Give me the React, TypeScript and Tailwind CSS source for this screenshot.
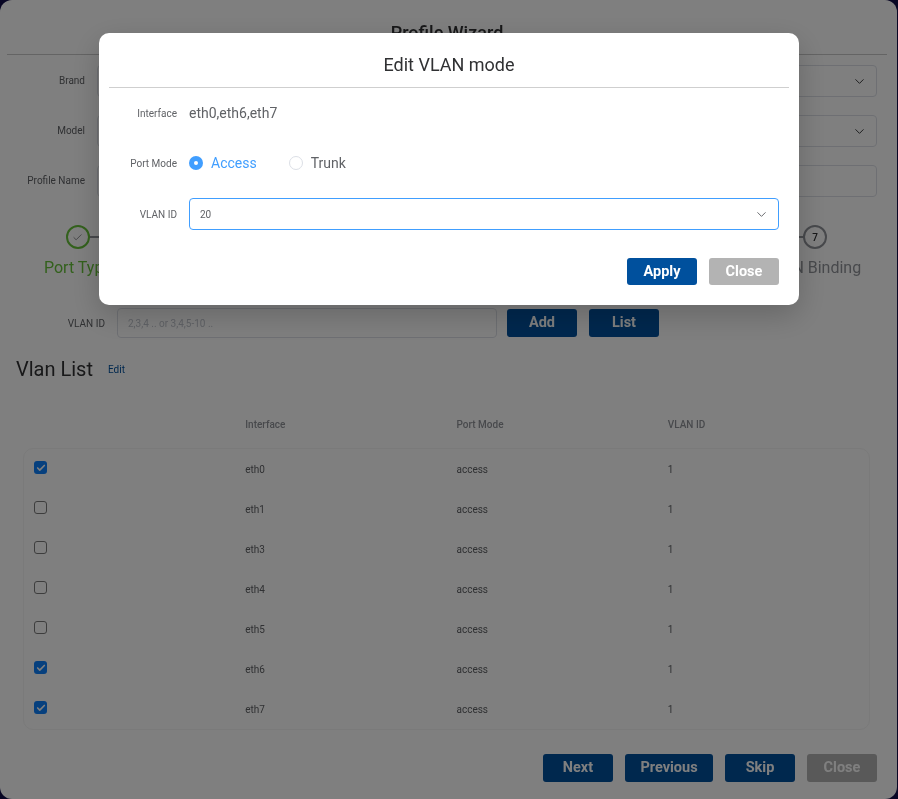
import { Check, ChevronDown } from 'lucide-react';

const ROWS = [
  { name: 'eth0', checked: true },
  { name: 'eth1', checked: false },
  { name: 'eth3', checked: false },
  { name: 'eth4', checked: false },
  { name: 'eth5', checked: false },
  { name: 'eth6', checked: true },
  { name: 'eth7', checked: true },
];

function ActionButton({ label, width = 'w-[70px]', tone = 'bg-[#00509d]', height = 'h-[28px]' }: { label: string; width?: string; tone?: string; height?: string }) {
  return (
    <button className={`${width} ${tone} ${height} rounded-[3px] text-[14.5px] font-bold text-white`}>
      {label}
    </button>
  );
}

function FormRow({ label, select }: { label: string; select?: boolean }) {
  return (
    <div className="flex items-center gap-3 h-8 mb-[18px]">
      <span className="w-[85px] pb-[2px] text-right text-[10px] text-[#606266]">{label}</span>
      <div className="flex-1 h-8 rounded-[4px] border border-[#dcdfe6] flex items-center justify-end pr-[9px]">
        {select && <ChevronDown size={15} strokeWidth={1.5} className="text-[#303133]" />}
      </div>
    </div>
  );
}

function Step({ n, label, done }: { n: number; label?: string; done?: boolean }) {
  return (
    <div className="relative flex-1 flex flex-col items-center">
      {n < 7 && <div className="absolute left-1/2 top-[11px] w-full h-0.5 bg-[#909399]" />}
      <div
        className={`relative z-10 w-6 h-6 rounded-full border-2 bg-white flex items-center justify-center text-[10px] font-medium ${
          done ? 'border-[#67c23a] text-[#606266]' : 'border-[#909399] text-[#303133]'
        }`}
      >
        {done ? <Check size={11} strokeWidth={1.5} /> : n}
      </div>
      {label && (
        <span className={`mt-[7px] text-base leading-[24px] whitespace-nowrap ${done ? 'text-[#67c23a]' : 'pr-[6px] text-[#909399]'}`}>
          {label}
        </span>
      )}
    </div>
  );
}

function WizardPanel() {
  return (
    <div className="isolate will-change-transform w-[897px] h-[799px] bg-white rounded-[12px] pl-[7px] pr-[10px]">
      <h2 className="h-[55px] pt-[21px] border-b border-[#c8c8c8] text-center text-lg leading-[24px] font-medium text-[#303133]">
        Profile Wizard
      </h2>

      <div className="pt-[10px] pr-[10px]">
        <div className="-ml-[7px]">
          <FormRow label="Brand" select />
          <FormRow label="Model" select />
          <FormRow label="Profile Name" />
        </div>
      </div>

      <div className="flex mt-[28px] ml-[9.5px] w-[860px] h-[73px]">
        <Step n={1} label="Port Type" done />
        <Step n={2} />
        <Step n={3} />
        <Step n={4} />
        <Step n={5} />
        <Step n={6} />
        <Step n={7} label="VLAN Binding" />
      </div>

      <div className="flex items-center h-[30px] mt-[10px]">
        <span className="w-[98px] text-right text-[10px] text-[#606266]">VLAN ID</span>
        <div className="ml-3 w-[380px] h-[30px] rounded-[4px] border border-[#dcdfe6] flex items-center px-[10px] text-[10px] text-[#c0c4cc]">
          2,3,4 .. or 3,4,5-10 ..
        </div>
        <div className="flex gap-3 ml-[10px]">
          <ActionButton label="Add" />
          <ActionButton label="List" />
        </div>
      </div>

      <div className="flex items-center gap-[15px] mt-[17px] ml-[9px] h-[28px]">
        <span className="text-xl leading-[28px] text-[#303133]">Vlan List</span>
        <span className="text-[10px] text-[#00509d]">Edit</span>
      </div>

      <div className="ml-[17px] w-[845px] mt-[21px]">
        <div className="grid grid-cols-4 h-[40px] items-center text-[10px] font-medium text-[#909399]">
          <span />
          <span className="px-[10px]">Interface</span>
          <span className="px-[10px]">Port Mode</span>
          <span className="px-[10px]">VLAN ID</span>
        </div>
        <div className="rounded-[10px] border border-[#f4f4f4] mt-[4px] -mx-px">
          {ROWS.map((row) => (
            <div key={row.name} className="grid grid-cols-4 h-[40px] items-center text-[10px] text-[#606266]">
              <span className="px-[10px] pb-[3px]">
                <span
                  className={`w-[13px] h-[13px] rounded-[3px] flex items-center justify-center ${
                    row.checked ? 'bg-[#0d80fd]' : 'border-[1.5px] border-[#7a7a7a] bg-white'
                  }`}
                >
                  {row.checked && <Check size={10} strokeWidth={4} className="text-white" />}
                </span>
              </span>
              <span className="px-[10px]">{row.name}</span>
              <span className="px-[10px]">access</span>
              <span className="px-[10px]">1</span>
            </div>
          ))}
        </div>
      </div>

      <div className="flex justify-end gap-3 mt-[24px] mr-[10px]">
        <ActionButton label="Next" />
        <ActionButton label="Previous" width="w-[88px]" />
        <ActionButton label="Skip" />
        <ActionButton label="Close" tone="bg-[#b3b3b3]" />
      </div>
    </div>
  );
}

function EditVlanDialog() {
  return (
    <div className="absolute left-[99px] top-[33px] w-[700px] h-[272px] bg-white rounded-[10px] shadow-[0_10px_30px_rgba(0,0,0,0.2)] px-[10px]">
      <div className="h-[55px] border-b border-[#cfcfcf] flex items-center justify-center pt-[9px]">
        <span className="text-lg text-[#303133]">Edit VLAN mode</span>
      </div>

      <div className="flex items-center mt-[9px] h-[32px]">
        <span className="w-[68px] text-right text-[10px] text-[#606266]">Interface</span>
        <span className="ml-3 text-sm text-[#606266]">eth0,eth6,eth7</span>
      </div>

      <div className="flex items-center mt-[18px] h-[32px]">
        <span className="w-[68px] text-right text-[10px] text-[#606266]">Port Mode</span>
        <span className="ml-3 w-[14px] h-[14px] rounded-full bg-[#409eff] flex items-center justify-center">
          <span className="w-1 h-1 rounded-full bg-white" />
        </span>
        <span className="ml-2 text-sm text-[#409eff]">Access</span>
        <span className="ml-8 w-[14px] h-[14px] rounded-full border border-[#dcdfe6] bg-white" />
        <span className="ml-2 text-sm text-[#606266]">Trunk</span>
      </div>

      <div className="flex items-center mt-[19px] h-[32px]">
        <span className="w-[68px] text-right text-[10px] text-[#606266]">VLAN ID</span>
        <div className="ml-3 w-[590px] h-[32px] rounded-[4px] border border-[#409eff] flex items-center justify-between pl-[10px] pr-[9px] text-[10px] text-[#606266]">
          <span>20</span>
          <ChevronDown size={15} strokeWidth={1.5} className="text-[#606266]" />
        </div>
      </div>

      <div className="flex justify-end gap-3 mt-[28px] mr-[10px]">
        <ActionButton label="Apply" height="h-[27px]" />
        <ActionButton label="Close" tone="bg-[#b3b3b3]" height="h-[27px]" />
      </div>
    </div>
  );
}

export default function App() {
  return (
    <div className="relative w-[898px] h-[799px] overflow-hidden bg-[#100c48] font-['Roboto',sans-serif]">
      <WizardPanel />
      <div className="absolute inset-0 bg-black/50" />
      <EditVlanDialog />
    </div>
  );
}
